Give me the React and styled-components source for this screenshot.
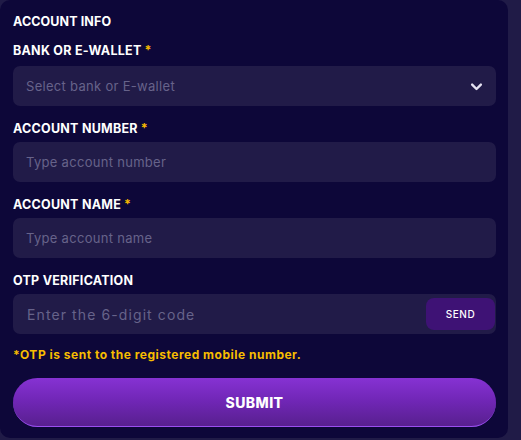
import React from 'react';
import styled, { createGlobalStyle } from 'styled-components';

const GlobalStyle = createGlobalStyle`
    html, body {
        margin: 0;
        padding: 0;
        background: #201b47;
        font-family: Inter, "Noto Sans", sans-serif;
    }
`;

const Card = styled.div`
    width: 508px;
    height: 438px;
    box-sizing: border-box;
    background: #0d0739;
    border-radius: 10px;
    padding: 14px 12px 0 13px;
    display: flex;
    flex-direction: column;
`;

const Title = styled.div`
    color: #ffffff;
    font-size: 12.5px;
    font-weight: 700;
    line-height: 16px;
    letter-spacing: 0.1px;
    margin-bottom: 13px;
`;

const Field = styled.div`
    display: flex;
    flex-direction: column;
    margin-bottom: 15px;
`;

const Label = styled.label`
    color: #ffffff;
    font-size: 12.5px;
    font-weight: 700;
    line-height: 16px;
    letter-spacing: 0.25px;
    margin-bottom: ${p => (p.$first ? '7px' : '5px')};
`;

const Star = styled.span`
    color: #f6b800;
    margin-left: 3px;
`;

const Box = styled.div`
    height: 40px;
    border-radius: 7px;
    background: #211b48;
    display: flex;
    align-items: center;
    padding: 0 1px 0 13px;
    box-sizing: border-box;
    justify-content: space-between;
`;

const Placeholder = styled.span`
    color: #67638a;
    font-size: ${p => (p.$big ? '14px' : '13px')};
    letter-spacing: ${p => (p.$big ? '1.1px' : '0.3px')};
    padding-left: ${p => (p.$big ? '1px' : '0')};
`;

const Chevron = styled.svg`
    width: 15px;
    height: 15px;
    margin-right: 11px;
`;

const SendButton = styled.button`
    width: 69px;
    height: 32px;
    border: none;
    border-radius: 8px;
    background: #3e1275;
    color: #ffffff;
    font-family: Inter, sans-serif;
    font-size: 10px;
    font-weight: 500;
    letter-spacing: 0.5px;
`;

const Note = styled.div`
    color: #f7bd00;
    font-size: 12px;
    font-weight: 700;
    line-height: 16px;
    letter-spacing: 0.5px;
    margin-top: -2px;
`;

const Submit = styled.button`
    margin-top: 15px;
    width: 483px;
    height: 49px;
    border: none;
    border-radius: 25px;
    background: linear-gradient(180deg, #8632d3 0%, #6f26b4 50%, #58208f 100%);
    border-bottom: 1px solid #9b4ff0;
    color: #ffffff;
    font-family: Inter, sans-serif;
    font-size: 14px;
    font-weight: 800;
    letter-spacing: 0.4px;
`;

export default function App() {
    return (
        <>
            <GlobalStyle />
            <Card>
                <Title>ACCOUNT INFO</Title>
                <Field>
                    <Label $first>BANK OR E-WALLET<Star>*</Star></Label>
                    <Box>
                        <Placeholder>Select bank or E-wallet</Placeholder>
                        <Chevron viewBox="0 0 24 24" fill="none" stroke="#e6e3f2" strokeWidth="3.8" strokeLinecap="round" strokeLinejoin="round">
                            <path d="M5 9l7 7 7-7" />
                        </Chevron>
                    </Box>
                </Field>
                <Field>
                    <Label>ACCOUNT NUMBER<Star>*</Star></Label>
                    <Box>
                        <Placeholder>Type account number</Placeholder>
                    </Box>
                </Field>
                <Field>
                    <Label>ACCOUNT NAME<Star>*</Star></Label>
                    <Box>
                        <Placeholder>Type account name</Placeholder>
                    </Box>
                </Field>
                <Field>
                    <Label>OTP VERIFICATION</Label>
                    <Box>
                        <Placeholder $big>Enter the 6-digit code</Placeholder>
                        <SendButton>SEND</SendButton>
                    </Box>
                </Field>
                <Note>*OTP is sent to the registered mobile number.</Note>
                <Submit>SUBMIT</Submit>
            </Card>
        </>
    );
}
